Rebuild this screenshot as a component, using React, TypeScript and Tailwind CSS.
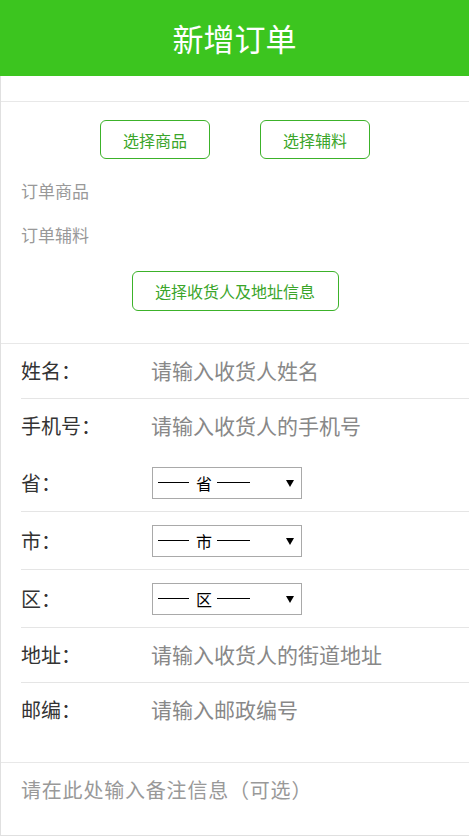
const font = "font-['Noto_Sans_CJK_SC','Noto_Sans',sans-serif]";

const InputRow = ({ label, placeholder, line = true }: { label: string; placeholder: string; line?: boolean }) => {
  return (
    <div
      className={`ml-[20px] flex h-[55px] items-center border-b ${line ? 'border-[#e5e5e5]' : 'border-transparent'}`}
    >
      <span className="w-[130px] text-[20px] text-[#333]">{label}</span>
      <span className="text-[21px] text-[#888]">{placeholder}</span>
    </div>
  );
};

const SelectRow = ({ label, value }: { label: string; value: string }) => {
  return (
    <div className="ml-[20px] flex h-[58px] items-center border-b border-[#e5e5e5]">
      <span className="w-[131px] text-[20px] text-[#333]">{label}</span>
      <div className="flex h-[32px] w-[150px] items-center border border-[#a9a9a9] bg-white pl-[5px] pr-[7px] text-[16px] text-black">
        <span className="h-px w-[31px] bg-black" />
        <span className="ml-[7px] mr-[5px]">{value}</span>
        <span className="h-px w-[33px] bg-black" />
        <svg className="ml-auto" width="8" height="8" viewBox="0 0 8 8">
          <path d="M0 1h8L4 8z" fill="#000" />
        </svg>
      </div>
    </div>
  );
};

const App = () => {
  return (
    <div className={`min-h-[837px] w-[469px] bg-white ${font}`}>
      <header className="flex h-[76px] items-center justify-center bg-[#3cc51f] text-[31px] text-white">
        新增订单
      </header>

      <div className="border-b border-l border-[#e0e0e0]">
        <div className="h-[25px]" />

        <section className="border-t border-[#e8e8e8] pb-[32px] pt-[18px]">
          <div className="flex justify-center gap-[50px]">
            <button className="h-[39px] w-[110px] rounded-[6px] border border-[#3cb22a] text-[16px] text-[#3aa52a]">
              选择商品
            </button>
            <button className="h-[39px] w-[110px] rounded-[6px] border border-[#3cb22a] text-[16px] text-[#3aa52a]">
              选择辅料
            </button>
          </div>
          <p className="mt-[20px] px-[20px] text-[17px] leading-[24px] text-[#999]">订单商品</p>
          <p className="mt-[20px] px-[20px] text-[17px] leading-[24px] text-[#999]">订单辅料</p>
          <div className="mt-[24px] flex justify-center">
            <button className="h-[40px] w-[207px] rounded-[6px] border border-[#3cb22a] text-[16px] text-[#3aa52a]">
              选择收货人及地址信息
            </button>
          </div>
        </section>

        <section className="border-t border-[#e8e8e8] pb-[24px]">
          <InputRow label="姓名：" placeholder="请输入收货人姓名" />
          <InputRow label="手机号：" placeholder="请输入收货人的手机号" line={false} />
          <SelectRow label="省：" value="省" />
          <SelectRow label="市：" value="市" />
          <SelectRow label="区：" value="区" />
          <InputRow label="地址：" placeholder="请输入收货人的街道地址" />
          <InputRow label="邮编：" placeholder="请输入邮政编号" line={false} />
        </section>

        <div className="h-[73px] border-t border-[#e8e8e8] px-[20px] pt-[13px] text-[20px] leading-[28px] tracking-[0.8px] text-[#999]">
          请在此处输入备注信息（可选）
        </div>
      </div>
    </div>
  );
};

export default App;
